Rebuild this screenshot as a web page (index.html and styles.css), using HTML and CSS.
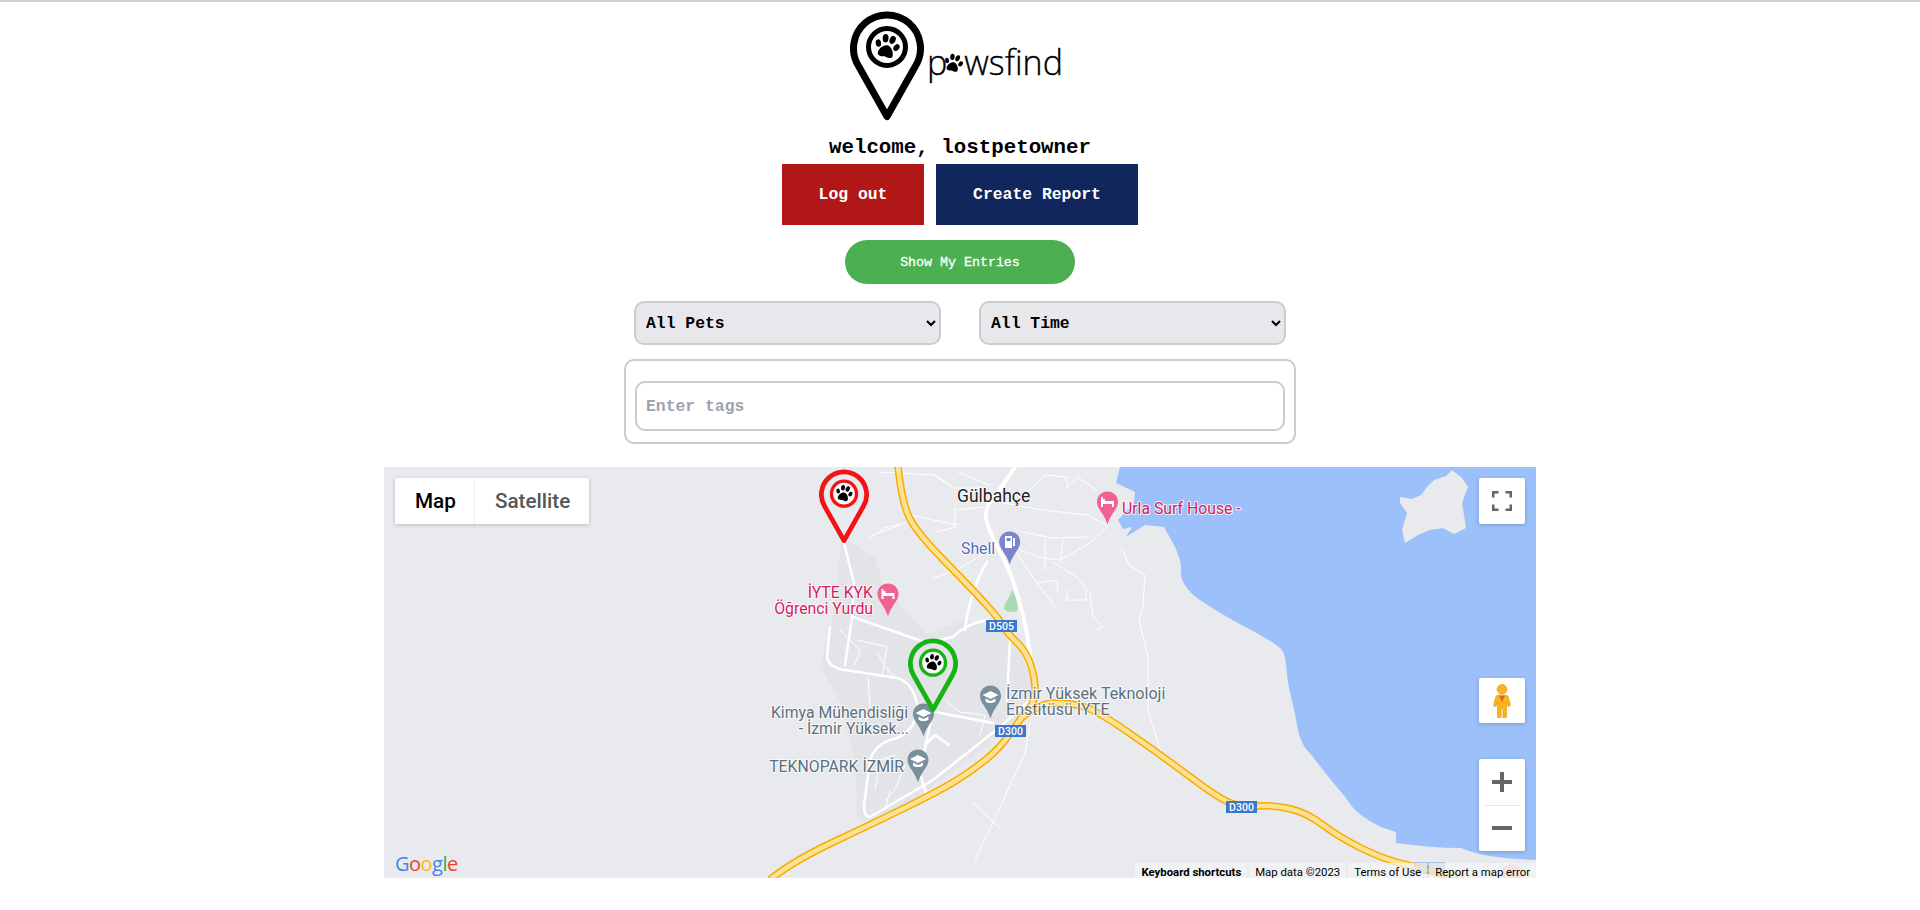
FILE: index.html
```html
<!DOCTYPE html>
<html lang="en">
<head>
    <meta charset="UTF-8">
    <meta name="viewport" content="width=device-width, initial-scale=1.0">
    <title>Pawsfind</title>
    <link rel="stylesheet" href="styles.css">
</head>
<body>
    <!-- shared shapes -->
    <svg class="defs" width="0" height="0">
        <symbol id="paw" viewBox="0 0 24 24">
            <g transform="rotate(14 12 12)">
                <ellipse cx="4" cy="10.5" rx="2.3" ry="3.2" transform="rotate(-25 4 10.5)"/>
                <ellipse cx="9" cy="5" rx="2.5" ry="3.6" transform="rotate(-10 9 5)"/>
                <ellipse cx="15.2" cy="5" rx="2.5" ry="3.6" transform="rotate(10 15.2 5)"/>
                <ellipse cx="20" cy="10.5" rx="2.3" ry="3.2" transform="rotate(25 20 10.5)"/>
                <path d="M12 10.5C15 10.5 18.5 14.5 18.5 18C18.5 21.5 15 21 12 20.2C9 21 5.5 21.5 5.5 18C5.5 14.5 9 10.5 12 10.5Z"/>
            </g>
        </symbol>
        <symbol id="pin" viewBox="0 0 74 110">
            <path class="pin-line" d="M37 105.5L8.5 55A33.5 33.5 0 1 1 65.5 55Z"/>
            <circle class="pin-ring" cx="37" cy="36" r="18.5"/>
            <use href="#paw" x="23" y="22" width="28" height="28"/>
        </symbol>
        <symbol id="poi" viewBox="0 0 22 34">
            <path d="M11 0.5C5 0.5 0.5 5 0.5 11C0.5 18 7.5 22 11 33.5C14.5 22 21.5 18 21.5 11C21.5 5 17 0.5 11 0.5Z"/>
        </symbol>
        <symbol id="cap" viewBox="0 0 22 34">
            <path class="poi-glyph" d="M11 6L19 10L11 14L3 10Z"/>
            <path class="poi-glyph" d="M6 13.5V16.5C8 18.5 14 18.5 16 16.5V13.5L11 16Z"/>
        </symbol>
    </svg>

    <header class="top">
        <div class="logo">
            <svg class="logo-pin"><use href="#pin"/></svg>
            <div class="logo-word">p<svg class="logo-paw"><use href="#paw"/></svg>wsfind</div>
        </div>
        <h2 class="welcome">welcome, lostpetowner</h2>
        <div class="actions">
            <button class="btn btn-logout">Log out</button>
            <button class="btn btn-report">Create Report</button>
        </div>
        <button class="btn-entries">Show My Entries</button>
    </header>

    <div class="filters">
        <select class="filter"><option>All Pets</option></select>
        <select class="filter"><option>All Time</option></select>
    </div>
    <div class="tag-box">
        <input class="tag-input" type="text" placeholder="Enter tags">
    </div>

    <main class="map">
        <svg class="map-base" viewBox="384 467 1152 411" preserveAspectRatio="none">
            <!-- land darker bits -->
            <path class="campus" d="M838 620L846 545L870 560L880 590L925 640L965 625L1010 640L1030 690L1000 730L960 760L880 820L862 815L860 760L845 700L825 665Z"/>
            <path class="park" d="M1012 590C1016 597 1019 606 1017 611C1012 613 1005 612 1004 608C1005 602 1010 597 1012 590Z"/>

            <!-- sea -->
            <path class="water" d="M1120 467L1116 483L1135 492L1134 503L1118 520L1123 529L1132 527L1126 537L1145 525L1164 527L1175 547Q1182 563 1181 570Q1180 577 1184.5 584.5Q1189 592 1196.5 597.5Q1204 603 1218 611.5Q1232 620 1244.5 626.5Q1257 633 1269.5 640.5Q1282 648 1284 654Q1286 660 1286.5 670Q1287 680 1291 696.5Q1295 713 1297.5 727.5Q1300 742 1307 750Q1314 758 1321.5 768Q1329 778 1338.5 789Q1348 800 1351 805Q1354 810 1364.5 817.5Q1375 825 1385.5 828.5L1396 832L1396 843Q1432 848 1461 848Q1482 858 1536 860L1536 467Z"/>
            <path class="land" d="M1400 497L1412 499L1421 495L1427 487L1434 480L1446 476L1452 470L1462 478L1468 487L1462 503L1464 515L1466 528L1454 534L1443 528L1430 530L1418 535L1405 543L1402 530L1407 513L1400 503Z"/>

            <!-- small roads -->
            <g class="road-thin">
                <path d="M1045 475L1067 477L1067 488"/>
                <path d="M1045 475L1033 487L1013 503"/>
                <path d="M1067 488L1077 477L1097 490"/>
                <path d="M930 473L953 487"/>
                <path d="M958 472L989 485"/>
                <path d="M878 472L936 475L954 488L980 488"/>
                <path d="M909 515L958 525"/>
                <path d="M873 535L900 525"/>
                <path d="M868 540L884 528L905 523"/>
                <path d="M933 578L957 570L985 553"/>
                <path d="M1003 503L1043 510L1087 515L1107 525"/>
                <path d="M955 508L955 527L937 532"/>
                <path d="M983 507L957 510"/>
                <path d="M1020 550L1043 558L1060 560L1090 543L1107 527"/>
                <path d="M1023 532L1053 538L1087 537"/>
                <path d="M1045 540L1045 570"/>
                <path d="M1063 540L1060 563"/>
                <path d="M1017 553L1037 583L1050 600L1055 607"/>
                <path d="M1037 583L1057 580L1058 593"/>
                <path d="M1053 562L1077 577L1090 593L1093 617L1103 627L1095 630"/>
                <path d="M1067 590L1067 600L1087 600L1085 590"/>
                <path d="M1121 547L1129 565L1145 575L1143 607L1139 620L1148 657L1148 710L1161 753"/>
                <path d="M1030 723L1025 753L1000 807L975 860"/>
                <path d="M973 803L1000 828"/>
                <path d="M840 630L860 650L855 665"/>
                <path d="M857 640L887 647L882 677"/>
                <path d="M877 653L890 673L895 677"/>
                <path d="M868 677L870 707"/>
                <path d="M945 700L960 712L985 715L980 735"/>
                <path d="M875 790L880 760L895 755"/>
                <path d="M890 790L885 810"/>
                <path d="M905 765L895 790L885 800"/>
            </g>

            <!-- white roads -->
            <g class="road">
                <path d="M844 543L854 583L852 617L845 665"/>
                <path d="M853 617L927 643L953 637Q967 623 987 620"/>
                <path d="M830 627L827 657Q829 668 845 670L897 678Q913 682 918 707"/>
                <path d="M933 710L920 773L927 797"/>
                <path d="M935 712L993 723"/>
                <path d="M870 817L933 780L1000 727L1030 700"/>
                <path d="M918 707Q915 735 890 740Q875 745 870 760L864 805Q864 817 870 817"/>
                <path d="M987 562Q970 590 965 630"/>
                <path d="M1010 640L1007 700"/>
                <path d="M949 745L935 735L925 745"/>
            </g>
            <path class="road-main" d="M1015 467Q1002 487 994.5 496Q987 505 986 512.5Q985 520 991 533.5Q997 547 1003.5 558.5Q1010 570 1018.5 598.5Q1027 627 1030 655"/>

            <!-- highways -->
            <g class="hwy">
                <path d="M898 467Q902 503 909.5 518Q917 533 945 561.5Q973 590 986.5 605Q1000 620 1003.5 626.5Q1007 633 1016 641.5Q1025 650 1029.5 661.5Q1034 673 1035 686.5Q1036 700 1028.5 709Q1021 718 1010.5 733Q1000 748 986.5 759Q973 770 957 780Q941 790 907.5 806.5Q874 823 834.5 841.5Q795 860 772 878"/>
                <path d="M1021 718Q1039 703 1055 703Q1071 703 1083.5 706.5Q1096 710 1128.5 732.5Q1161 755 1191 777.5Q1221 800 1232 803.5Q1243 807 1259 806Q1275 805 1291 809Q1307 813 1323 825Q1339 837 1359 847Q1379 857 1393 861Q1407 865 1460 878"/>
            </g>
            <g class="hwy-fill">
                <path d="M898 467Q902 503 909.5 518Q917 533 945 561.5Q973 590 986.5 605Q1000 620 1003.5 626.5Q1007 633 1016 641.5Q1025 650 1029.5 661.5Q1034 673 1035 686.5Q1036 700 1028.5 709Q1021 718 1010.5 733Q1000 748 986.5 759Q973 770 957 780Q941 790 907.5 806.5Q874 823 834.5 841.5Q795 860 772 878"/>
                <path d="M1021 718Q1039 703 1055 703Q1071 703 1083.5 706.5Q1096 710 1128.5 732.5Q1161 755 1191 777.5Q1221 800 1232 803.5Q1243 807 1259 806Q1275 805 1291 809Q1307 813 1323 825Q1339 837 1359 847Q1379 857 1393 861Q1407 865 1460 878"/>
            </g>

            <!-- road shields -->
            <rect class="shield" x="986" y="620" width="31" height="12"/>
            <text class="shield-text" x="1001.5" y="630">D505</text>
            <rect class="shield" x="995" y="725" width="31" height="12"/>
            <text class="shield-text" x="1010.5" y="735">D300</text>
            <rect class="shield" x="1226" y="801" width="31" height="12"/>
            <text class="shield-text" x="1241.5" y="811">D300</text>
            <rect class="shield shield-faded" x="1414" y="862" width="31" height="12"/>
            <circle class="poi-faded" cx="1512" cy="875" r="11"/>

            <!-- places -->
            <use class="poi-pink" href="#poi" x="1096.5" y="491" width="22" height="34"/>
            <path class="poi-glyph" d="M1101 497V507H1103V504H1112V507H1114V501H1105V499H1103V497Z"/>
            <use class="poi-pink" href="#poi" x="877" y="583" width="22" height="34"/>
            <path class="poi-glyph" d="M881.5 589V599H883.5V596H892.5V599H894.5V593H885.5V591H883.5V589Z"/>
            <use class="poi-blue" href="#poi" x="998.5" y="531" width="22.5" height="34"/>
            <path class="poi-glyph" d="M1005 536H1012V548H1005ZM1006.5 538V541H1010.5V538ZM1013 538H1015V546H1013Z"/>
            <use class="poi-grey" href="#poi" x="912.5" y="703" width="22" height="34"/>
            <use href="#cap" x="912.5" y="703" width="22" height="34"/>
            <use class="poi-grey" href="#poi" x="907" y="749" width="22" height="34"/>
            <use href="#cap" x="907" y="749" width="22" height="34"/>
            <use class="poi-grey" href="#poi" x="979.5" y="685" width="22" height="34"/>
            <use href="#cap" x="979.5" y="685" width="22" height="34"/>

            <text class="label label-dark" x="957" y="502">Gülbahçe</text>
            <text class="label label-pink" x="1122" y="514">Urla Surf House -</text>
            <text class="label label-blue" x="961" y="554">Shell</text>
            <text class="label label-pink label-end" x="873" y="598">İYTE KYK</text>
            <text class="label label-pink label-end" x="873" y="614">Öğrenci Yurdu</text>
            <text class="label label-grey label-end" x="908" y="718">Kimya Mühendisliği</text>
            <text class="label label-grey label-end" x="909" y="734">- İzmir Yüksek...</text>
            <text class="label label-grey label-end" x="904" y="772">TEKNOPARK İZMİR</text>
            <text class="label label-grey label-wide" x="1006" y="699">İzmir Yüksek Teknoloji</text>
            <text class="label label-grey label-wide" x="1006" y="715">Enstitüsü İYTE</text>
        </svg>

        <!-- report markers -->
        <svg class="marker marker-lost"><use href="#pin"/></svg>
        <svg class="marker marker-found"><use href="#pin"/></svg>

        <div class="map-type">
            <div class="map-type-item map-type-active">Map</div>
            <div class="map-type-item">Satellite</div>
        </div>

        <button class="map-btn map-fullscreen">
            <svg width="20" height="20" viewBox="0 0 20 20"><path d="M1.25 6.5V1.25H6.5M13.5 1.25H18.75V6.5M18.75 13.5V18.75H13.5M6.5 18.75H1.25V13.5"/></svg>
        </button>
        <button class="map-btn map-pegman">
            <svg width="18" height="34" viewBox="0 0 20 38">
                <circle class="peg-body" cx="10" cy="6" r="5.5"/>
                <path class="peg-body" d="M5 12.5H15Q17 13 17.5 16L19.5 24L17 25.5L15 20V37.5H11V27H9V37.5H5V20L3 25.5L0.5 24L2.5 16Q3 13 5 12.5Z"/>
                <path class="peg-neck" d="M6.5 13H13.5L10 20Z"/>
            </svg>
        </button>
        <div class="map-zoom">
            <button class="map-zoom-btn">
                <svg width="20" height="20" viewBox="0 0 20 20"><path d="M0 10H20M10 0V20"/></svg>
            </button>
            <div class="map-zoom-sep"></div>
            <button class="map-zoom-btn">
                <svg width="20" height="20" viewBox="0 0 20 20"><path d="M0 10H20"/></svg>
            </button>
        </div>

        <div class="google"><span class="g-blue">G</span><span class="g-red">o</span><span class="g-yellow">o</span><span class="g-blue">g</span><span class="g-green">l</span><span class="g-red">e</span></div>

        <div class="credits">
            <span class="credit credit-bold">Keyboard shortcuts</span>
            <span class="credit">Map data ©2023</span>
            <span class="credit">Terms of Use</span>
            <span class="credit">Report a map error</span>
        </div>
    </main>
</body>
</html>
```

FILE: styles.css
```css
body {
    margin: 0;
    padding: 0;
    border-top: 2px solid #d0d0d0;
    background-color: #fff;
    font-family: "Liberation Mono", monospace;
    display: flex;
    flex-direction: column;
    align-items: center;
}

.defs {
    position: absolute;
}

.top {
    display: flex;
    flex-direction: column;
    align-items: center;
}

/* logo */
.logo {
    display: flex;
    gap: 3px;
    margin-top: 9px;
    padding-right: 8px;
    height: 110px;
}
.logo-pin {
    width: 74px;
    height: 110px;
    color: #000;
}
.logo-word {
    font-family: "Open Sans", sans-serif;
    font-weight: 300;
    font-size: 34px;
    line-height: 46px;
    margin-top: 28px;
    color: #000;
    -webkit-text-stroke: 0.35px #000;
    display: flex;
    align-items: center;
    width: 135px;
    height: 46px;
}
.logo-paw {
    width: 21px;
    height: 21px;
    margin: 3px 0 0 -4px;
    flex-shrink: 0;
}

/* pin shape */
.pin-line {
    fill: none;
    stroke: currentColor;
    stroke-width: 7;
    stroke-linejoin: round;
}
.pin-ring {
    fill: #fff;
    stroke: currentColor;
    stroke-width: 5;
}

.welcome {
    margin: 11px 0 0;
    font-size: 20.8px;
    line-height: 32px;
    font-weight: bold;
    color: #000;
}

.actions {
    display: flex;
    gap: 12px;
}
.btn {
    border: 0;
    height: 61px;
    color: #fff;
    font-family: inherit;
    font-size: 16.4px;
    font-weight: bold;
    padding: 0;
}
.btn-logout {
    width: 142px;
    background-color: #b21717;
}
.btn-report {
    width: 202px;
    background-color: #10265c;
}
.btn-entries {
    margin-top: 15px;
    width: 230px;
    height: 44px;
    border: 0;
    border-radius: 22px;
    background-color: #4caf50;
    color: #fff;
    font-family: inherit;
    font-size: 13.3px;
    -webkit-text-stroke: 0.3px #fff;
    padding: 0;
}

/* filters */
.filters {
    display: flex;
    gap: 38px;
    margin-top: 17px;
}
.filter {
    width: 307px;
    height: 44px;
    padding: 0 4px 0 6px;
    border: 2px solid #ccc;
    border-radius: 10px;
    background-color: #e8e8ec;
    color: #000;
    font-family: inherit;
    font-size: 16.4px;
    font-weight: bold;
}

.tag-box {
    box-sizing: border-box;
    width: 672px;
    height: 85px;
    margin-top: 14px;
    padding: 20px 9px 0;
    border: 2px solid #ccc;
    border-radius: 10px;
}
.tag-input {
    box-sizing: border-box;
    display: block;
    width: 100%;
    height: 50px;
    padding: 0 9px;
    border: 2px solid #ccc;
    border-radius: 10px;
    font-family: inherit;
    font-size: 16.4px;
    font-weight: bold;
}
.tag-input::placeholder {
    color: #9ca3af;
}

/* map */
.map {
    position: relative;
    width: 1152px;
    height: 411px;
    margin-top: 23px;
    background-color: #e8eaed;
    overflow: hidden;
    font-family: Roboto, sans-serif;
}
.map-base {
    display: block;
    width: 100%;
    height: 100%;
}
.water { fill: #9cc0f9; }
.land { fill: #e8eaed; }
.campus {
    fill: #e2e4e8;
    stroke: #e2e4e8;
    stroke-width: 10;
    stroke-linejoin: round;
}
.park { fill: #a8dab5; }

.road, .road-thin, .road-main, .hwy, .hwy-fill {
    fill: none;
    stroke-linejoin: round;
    stroke-linecap: round;
}
.road { stroke: #fff; stroke-width: 2.5; }
.road-thin { stroke: #fff; stroke-width: 1; }
.road-main { stroke: #fff; stroke-width: 4; }
.hwy { stroke: #f9ab00; stroke-width: 7.5; }
.hwy-fill { stroke: #fde293; stroke-width: 4.5; }

.shield { fill: #3b78c9; }
.shield-faded { opacity: 0.35; }
.shield-text {
    fill: #fff;
    font-size: 10.5px;
    font-weight: 500;
    text-anchor: middle;
}
.poi-faded { fill: #f28bb0; opacity: 0.6; }
.poi-pink { fill: #f06292; }
.poi-blue { fill: #7986cb; }
.poi-grey { fill: #78909c; }
.poi-glyph { fill: #fff; }

.label {
    font-size: 15.8px;
    paint-order: stroke;
    stroke: #fff;
    stroke-width: 2px;
    stroke-linejoin: round;
    stroke-opacity: 0.8;
}
.label-end { text-anchor: end; }
.label-wide { font-size: 16.1px; }
.label-dark { fill: #202124; font-size: 17.5px; }
.label-pink { fill: #d81b60; }
.label-blue { fill: #5c6bc0; }
.label-grey { fill: #5b6f7c; }

.marker {
    position: absolute;
    width: 50px;
    height: 75px;
}
.marker-lost {
    left: 435px;
    top: 2px;
    color: #f01414;
}
.marker-found {
    left: 524px;
    top: 171px;
    color: #14b414;
}

/* google controls */
.map-type {
    position: absolute;
    left: 11px;
    top: 11px;
    display: flex;
    height: 46px;
    background-color: #fff;
    border-radius: 2px;
    box-shadow: 0 1px 4px rgba(0, 0, 0, 0.2);
}
.map-type-item {
    display: flex;
    align-items: center;
    padding: 0 19px 0 20px;
    font-size: 20.7px;
    color: #565656;
    font-weight: 500;
}
.map-type-active {
    color: #000;
    padding-right: 18px;
    border-right: 1px solid #eee;
}
.map-btn {
    position: absolute;
    right: 11px;
    width: 46px;
    border: 0;
    padding: 0;
    background-color: #fff;
    border-radius: 2px;
    box-shadow: 0 1px 4px rgba(0, 0, 0, 0.2);
    display: flex;
    align-items: center;
    justify-content: center;
}
.map-btn path {
    fill: none;
    stroke: #666;
    stroke-width: 2.5;
}
.map-zoom-btn path {
    fill: none;
    stroke: #666;
    stroke-width: 4;
}
.map-fullscreen {
    top: 11px;
    height: 46px;
}
.map-pegman {
    top: 211px;
    height: 45px;
}
.map-btn .peg-body {
    fill: #fbb41f;
    stroke: #d98e00;
    stroke-width: 0.6;
}
.map-btn .peg-neck {
    fill: #d96a20;
    stroke: none;
}
.map-zoom {
    position: absolute;
    right: 11px;
    top: 292px;
    width: 46px;
    height: 92px;
    background-color: #fff;
    border-radius: 2px;
    box-shadow: 0 1px 4px rgba(0, 0, 0, 0.2);
    display: flex;
    flex-direction: column;
    align-items: center;
}
.map-zoom-btn {
    flex: 1;
    width: 100%;
    border: 0;
    padding: 0;
    background: none;
    display: flex;
    align-items: center;
    justify-content: center;
}
.map-zoom-sep {
    width: 34px;
    height: 1px;
    background-color: #e6e6e6;
}

.google {
    position: absolute;
    left: 11px;
    bottom: 1px;
    font-family: "Open Sans", sans-serif;
    font-size: 20px;
    line-height: 26px;
    letter-spacing: -0.5px;
}
.g-blue { color: #4285f4; }
.g-red { color: #ea4335; }
.g-yellow { color: #fbbc05; }
.g-green { color: #34a853; }

.credits {
    position: absolute;
    right: 0;
    bottom: 0;
    height: 15px;
    display: flex;
    gap: 2px;
    font-size: 11.35px;
    line-height: 18px;
    color: #000;
}
.credit {
    padding: 0 6px;
    background-color: rgba(245, 245, 245, 0.7);
    white-space: nowrap;
}
.credit-bold {
    font-weight: bold;
}
```
